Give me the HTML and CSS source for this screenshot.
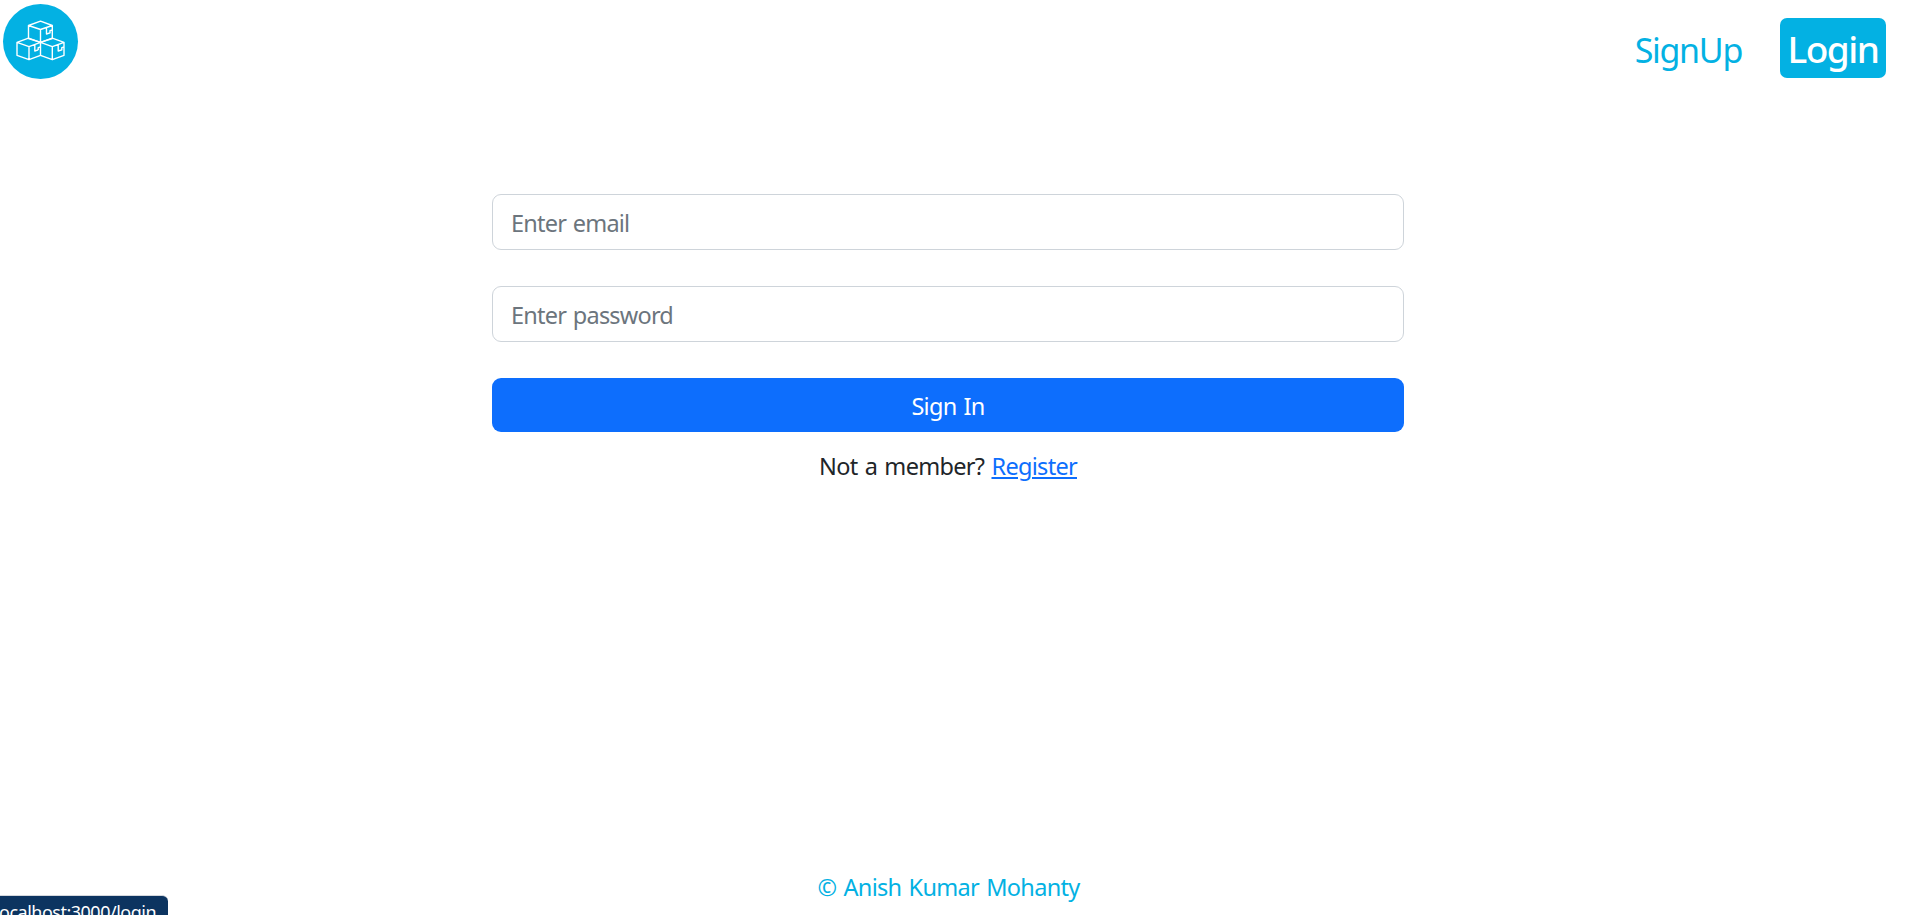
FILE: index.html
```html
<!DOCTYPE html>
<html lang="en">
<head>
<meta charset="utf-8">
<title>Login</title>
<link rel="stylesheet" href="styles.css">
</head>
<body>
<header class="navbar">
  <a class="brand" href="#" aria-label="Home">
    <svg class="logo" viewBox="0 0 90 90" fill="none">
      <circle cx="40.5" cy="41.5" r="37.5" fill="#03b1e3"/>
      <g stroke="#fff" stroke-width="1.4" stroke-linejoin="round">
        <path d="M28.5 25.5 40.5 21.2 52.3 25.5V38.5L40.5 42.3 28.5 38.5ZM28.5 25.5 40.5 29.5 52.3 25.5M40.5 29.5V42.3M46.5 27.5V34L50 32.8V30.6L52.3 30"/>
        <path d="M17 42.3 28.5 38.2 40.5 42.3V55.3L29 59.7 17 55.3ZM17 42.3 29 46.7 40.5 42.3M29 46.7V59.7M34.8 44.5V51L38.2 49.8"/>
        <path d="M40.5 42.3 52.3 38.2 64 42.3V55.3L52.3 59.7 40.5 55.3M40.5 42.3 52.3 46.7 64 42.3M52.3 46.7V59.7M58.2 44.5V51L61.8 49.8V47.6L64 47M38.2 50V47.6L40.5 47"/>
      </g>
    </svg>
  </a>
  <nav class="links">
    <a class="signup" href="#">SignUp</a>
    <a class="login" href="#">Login</a>
  </nav>
</header>
<main class="main">
  <form class="form">
    <input class="field" type="email" placeholder="Enter email">
    <input class="field" type="password" placeholder="Enter password">
    <button class="submit" type="button"><span>Sign In</span></button>
    <p class="member">Not a member? <a href="#">Register</a></p>
  </form>
</main>
<footer class="footer">© Anish Kumar Mohanty</footer>
<div class="status">localhost:3000/login</div>
</body>
</html>
```
FILE: styles.css
```css
* { box-sizing: border-box; }
body {
  margin: 0;
  height: 915px;
  overflow: hidden;
  display: flex;
  flex-direction: column;
  background: #fff;
  color: #212529;
  font-family: "Noto Sans", "Open Sans", sans-serif;
  font-size: 23.5px;
  line-height: 36px;
}
.navbar {
  display: flex;
  justify-content: space-between;
  height: 90px;
  padding-right: 22px;
}
.brand, .logo { display: block; width: 90px; height: 90px; }
.links { display: flex; gap: 38px; padding-top: 18px; }
.links a { text-decoration: none; height: 60px; white-space: nowrap; }
.signup {
  color: #03b1e3;
  font-size: 34px;
  line-height: 65px;
  letter-spacing: -1.3px;
}
.login {
  width: 106px;
  border-radius: 7px;
  background: #03b1e3;
  color: #fff;
  font-size: 37px;
  font-weight: 500;
  line-height: 61px;
  letter-spacing: -1.5px;
  text-align: center;
}
.main { flex: 1; padding-top: 104px; }
.form { width: 912px; margin-left: 492px; display: flex; flex-direction: column; }
.field {
  height: 56px;
  margin: 0 0 36px;
  padding: 2px 18px 0;
  border: 1px solid #ced4da;
  border-radius: 9px;
  background: #fff;
  font: inherit;
  letter-spacing: -0.8px;
  word-spacing: 1.5px;
}
.field::placeholder { color: #6c757d; opacity: 1; }
.submit {
  height: 54px;
  padding: 2px 0 0;
  border: 0;
  border-radius: 9px;
  background: #0d6efd;
  color: #fff;
  font: inherit;
  letter-spacing: -0.7px;
  word-spacing: 1.5px;
}
.member { margin: 16px 0 0; text-align: center; letter-spacing: -0.7px; word-spacing: 1.8px; }
.member a { color: #0d6efd; text-underline-offset: 2px; text-decoration-thickness: 2px; }
.footer {
  height: 46px;
  padding-right: 11px;
  text-align: center;
  color: #03b1e3;
  letter-spacing: -0.7px;
  word-spacing: 1.8px;
}
.status {
  position: absolute;
  left: 0;
  bottom: 0;
  width: 168px;
  height: 20px;
  overflow: hidden;
  display: flex;
  justify-content: flex-end;
  padding-right: 12px;
  border-top: 1px solid #d5d8dd;
  border-top-right-radius: 6px;
  background: #0c3460;
  color: #fff;
  font-size: 18px;
  line-height: 32px;
  letter-spacing: -0.5px;
}
```
